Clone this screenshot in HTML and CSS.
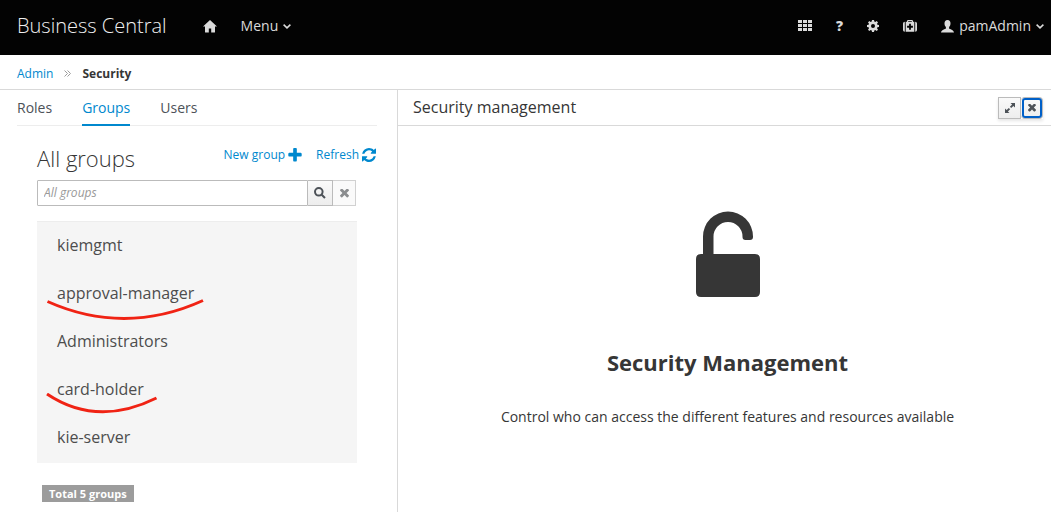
FILE: index.html
```html
<!DOCTYPE html>
<html lang="en">
<head>
<meta charset="utf-8">
<meta name="viewport" content="width=device-width, initial-scale=1">
<title>Business Central</title>
<link rel="stylesheet" href="styles.css">
</head>
<body>
<header class="masthead">
  <a class="brand" href="#">Business Central</a>
  <nav class="main-nav">
    <a class="nav-icon" href="#" aria-label="Home"><svg width="14" height="13" viewBox="0 0 14 13"><path d="M7 0 0 6.600h2V12a.5.5 0 0 0 .5.5h3.300V8.500h2.400v4h3.300A.5.5 0 0 0 12 12V6.600h2z"/></svg></a>
    <button class="nav-button" type="button">Menu <svg class="caret" width="8" height="5" viewBox="0 0 8 5"><path d="m.6.600 3.400 3.300L7.400.6"/></svg></button>
  </nav>
  <nav class="utility-nav">
    <button class="nav-icon" type="button" aria-label="Apps"><svg width="14" height="12" viewBox="0 0 14 12"><path d="M0 0h4v3H0zM5 0h4v3H5zM10 0h4v3h-4zM0 4h4v3H0zM5 4h4v3H5zM10 4h4v3h-4zM0 8h4v3H0zM5 8h4v3H5zM10 8h4v3h-4z"/></svg></button>
    <button class="nav-icon help" type="button" aria-label="Help">?</button>
    <button class="nav-icon" type="button" aria-label="Settings"><svg width="12" height="12" viewBox="0 0 12 12"><path fill-rule="evenodd" d="M5 0h2l.3 1.600 1 .4L9.700 1.100 11 2.400 10 3.700l.4 1L12 5v2l-1.600.3-.4 1 1 1.400-1.300 1.300L8.300 10l-1 .4L7 12H5l-.3-1.600-1-.4-1.400 1L1 9.700l1-1.400-.4-1L0 7V5l1.600-.3.4-1-1-1.300 1.300-1.300L3.700 2l1-.4zM6 4a2 2 0 1 0 0 4 2 2 0 0 0 0-4z"/></svg></button>
    <button class="nav-icon" type="button" aria-label="Support"><svg width="14" height="12" viewBox="0 0 14 12"><path fill-rule="evenodd" d="M1.800 1.800v10A1.800 1.800 0 0 1 0 10V3.600a1.800 1.800 0 0 1 1.800-1.800zM12.200 1.800A1.800 1.800 0 0 1 14 3.600V10a1.800 1.800 0 0 1-1.800 1.800zM4 1.800V.8L4.800 0h4.400l.8.8v1h1.300v10H2.700v-10zM5.200 1.800h3.600v-.7H5.200zM6.100 3.800v2H4.100v1.900h2v2h1.800v-2h2V5.800h-2v-2z"/></svg></button>
    <button class="nav-button user" type="button"><svg width="13" height="13" viewBox="0 0 13 13"><path d="M6.500 0c2 0 3 1.300 3 3.200 0 1.600-.5 2.900-1.400 3.700v1.500c.3.700 4.900 1.300 4.900 4.100H0c0-2.800 4.600-3.400 4.900-4.100V6.900c-.9-.8-1.400-2.100-1.400-3.700C3.500 1.300 4.500 0 6.500 0z"/></svg>pamAdmin <svg class="caret" width="8" height="5" viewBox="0 0 8 5"><path d="m.6.600 3.400 3.300L7.400.6"/></svg></button>
  </nav>
</header>

<nav class="breadcrumb" aria-label="Breadcrumb">
  <a href="#">Admin</a>
  <svg width="7" height="7" viewBox="0 0 7 7"><path d="m.5.500 3 3-3 3M3.500.5l3 3-3 3"/></svg>
  <strong>Security</strong>
</nav>

<div class="workspace">
  <aside class="sidebar">
    <nav class="tabs">
      <a href="#">Roles</a>
      <a class="active" href="#">Groups</a>
      <a href="#">Users</a>
    </nav>
    <div class="groups">
      <div class="groups-head">
        <h2>All groups</h2>
        <div class="actions">
          <a href="#">New group <svg width="14" height="14" viewBox="160 128 1472 1472"><path d="M1600 736v192q0 40-28 68t-68 28h-416v416q0 40-28 68t-68 28h-192q-40 0-68-28t-28-68v-416h-416q-40 0-68-28t-28-68v-192q0-40 28-68t68-28h416v-416q0-40 28-68t68-28h192q40 0 68 28t28 68v416h416q40 0 68 28t28 68z"/></svg></a>
          <a href="#">Refresh <svg width="14" height="14" viewBox="128 128 1536 1536"><path d="M1639 1056q0 5-1 7-64 268-268 434.500t-478 166.500q-146 0-282.500-55t-243.500-157l-129 129q-19 19-45 19t-45-19-19-45v-448q0-26 19-45t45-19h448q26 0 45 19t19 45-19 45l-137 137q71 66 161 102t187 36q134 0 250-65t186-179q11-17 53-117 8-23 30-23h192q13 0 22.500 9.500t9.500 22.500zm25-800v448q0 26-19 45t-45 19h-448q-26 0-45-19t-19-45 19-45l138-138q-148-137-349-137-134 0-250 65t-186 179q-11 17-53 117-8 23-30 23h-199q-13 0-22.500-9.500t-9.500-22.500v-7q65-268 270-434.500t480-166.500q146 0 284 55.500t245 156.500l130-129q19-19 45-19t45 19 19 45z"/></svg></a>
        </div>
      </div>
      <form class="search">
        <input type="text" placeholder="All groups" aria-label="Search groups">
        <button type="button" aria-label="Search"><svg width="12" height="12" viewBox="0 0 12 12"><circle class="lens" cx="4.800" cy="4.800" r="3.800"/><path class="lens" d="m7.700 7.700 3.300 3.300"/></svg></button>
        <button class="clear" type="button" aria-label="Clear"><svg width="9" height="9" viewBox="302 430 1188 1188"><path d="M1490 1322q0 40-28 68l-136 136q-28 28-68 28t-68-28l-294-294-294 294q-28 28-68 28t-68-28l-136-136q-28-28-28-68t28-68l294-294-294-294q-28-28-28-68t28-68l136-136q28-28 68-28t68 28l294 294 294-294q28-28 68-28t68 28l136 136q28 28 28 68t-28 68l-294 294 294 294q28 28 28 68z"/></svg></button>
      </form>
      <ul class="group-list">
        <li>kiemgmt</li>
        <li>approval-manager<svg class="stroke" width="160" height="24" viewBox="0 0 160 24"><path d="M1.500 4.500Q79 39 157 3.500"/></svg></li>
        <li>Administrators</li>
        <li>card-holder<svg class="stroke" width="114" height="24" viewBox="0 0 114 24"><path d="M1 1Q51 34.500 110.500 5"/></svg></li>
        <li>kie-server</li>
      </ul>
      <span class="total">Total 5 groups</span>
    </div>
  </aside>

  <main class="panel">
    <div class="panel-head">
      <h1>Security management</h1>
      <div class="panel-buttons">
        <button type="button" aria-label="Maximize"><svg width="10" height="10" viewBox="0 0 10 10"><path d="M5.500 0H10v4.500L8.400 2.900 6.200 5.100 4.900 3.800l2.200-2.200zM4.500 10H0V5.500l1.600 1.600 2.200-2.200 1.300 1.300-2.200 2.200z"/></svg></button>
        <button class="focused" type="button" aria-label="Close"><svg width="8" height="8" viewBox="302 430 1188 1188"><path d="M1490 1322q0 40-28 68l-136 136q-28 28-68 28t-68-28l-294-294-294 294q-28 28-68 28t-68-28l-136-136q-28-28-28-68t28-68l294-294-294-294q-28-28-28-68t28-68l136-136q28-28 68-28t68 28l294 294 294-294q28-28 68-28t68 28l136 136q28 28 28 68t-28 68l-294 294 294 294q28 28 28 68z"/></svg></button>
      </div>
    </div>
    <div class="welcome">
      <svg width="64" height="86" viewBox="0 0 64 86"><path d="M7 43V25.500a25 25 0 0 1 50 0V26q0 3-3 3h-4.500q-3 0-3-3v-.5a14.500 14.500 0 0 0-29 0V43H59q5 0 5 5v33q0 5-5 5H5q-5 0-5-5V48q0-5 5-5z"/></svg>
      <h2>Security Management</h2>
      <p>Control who can access the different features and resources available</p>
    </div>
  </main>
</div>
</body>
</html>
```
FILE: styles.css
```css
* {
  box-sizing: border-box;
}

body {
  margin: 0;
  min-height: 100vh;
  display: flex;
  flex-direction: column;
  background: #fff;
  color: #363636;
  font: 12px/20px "Open Sans", "Noto Sans", sans-serif;
}

h1, h2, p, ul {
  margin: 0;
  padding: 0;
}

a {
  color: #0088ce;
  text-decoration: none;
}

button, input {
  font: inherit;
}

button {
  margin: 0;
  cursor: pointer;
}

svg {
  flex: none;
  fill: currentColor;
}

.masthead {
  display: flex;
  align-items: center;
  height: 55px;
  padding: 0 7px 3px 17px;
  background: #030303;
  color: #dbdbdb;
}

.brand {
  color: #f0f0f0;
  font-size: 20px;
  font-weight: 300;
  line-height: 28px;
}

.main-nav, .utility-nav {
  display: flex;
  align-items: center;
}

.main-nav {
  gap: 24px;
  margin-left: 36px;
}

.utility-nav {
  gap: 24px;
  margin-left: auto;
}

.nav-icon, .nav-button {
  display: flex;
  align-items: center;
  padding: 0;
  border: 0;
  background: none;
  color: inherit;
  font-size: 14px;
}

.nav-button {
  gap: 5px;
}

.help {
  font-weight: 800;
}

.caret {
  fill: none;
  stroke: currentColor;
  stroke-width: 1.5;
}

.breadcrumb {
  display: flex;
  align-items: center;
  gap: 11px;
  height: 35px;
  padding: 3px 17px 0;
  border-bottom: 1px solid #d9d9d9;
}

.breadcrumb svg {
  fill: none;
  stroke: #9c9c9c;
}

.workspace {
  flex: 1;
  display: grid;
  grid-template-columns: minmax(0, 398fr) minmax(0, 653fr);
}

.sidebar {
  padding-left: 17px;
  padding-right: 20px;
  border-right: 1px solid #d9d9d9;
}

.tabs {
  display: flex;
  gap: 30px;
  height: 36px;
  border-bottom: 1px solid #ededed;
  font-size: 14px;
}

.tabs a {
  height: 36px;
  padding-top: 8px;
  color: #4d5258;
}

.tabs .active {
  border-bottom: 2px solid #0088ce;
  color: #0088ce;
}

.groups {
  padding: 18px 1px 10px 20px;
}

.groups-head {
  display: flex;
  justify-content: space-between;
  height: 36px;
}

.groups-head h2 {
  font-size: 22px;
  font-weight: 300;
  line-height: 28px;
}

.actions {
  display: flex;
  gap: 14px;
}

.actions a {
  display: flex;
  align-items: center;
  gap: 3px;
  height: 22px;
}

.search {
  display: flex;
  height: 26px;
  margin-right: 20px;
}

.search input {
  flex: 1;
  min-width: 0;
  padding: 0 6px;
  border: 1px solid #bbb;
  border-radius: 1px 0 0 1px;
}

.search input::placeholder {
  color: #999;
  font-style: italic;
}

.search button, .panel-buttons button {
  display: flex;
  align-items: center;
  justify-content: center;
  padding: 0;
  border: 1px solid #bbb;
  background: linear-gradient(#fafafa, #ededed);
  color: #4d5258;
}

.search button {
  width: 25px;
  border-left: 0;
}

.search .clear {
  width: 23px;
  border-color: #d1d1d1;
  background: #fafafa;
  color: #8b8d8f;
}

.lens {
  fill: none;
  stroke: currentColor;
  stroke-width: 2;
}

.group-list {
  margin-top: 15px;
  margin-right: 19px;
  padding-bottom: 1px;
  border-top: 1px solid #ededed;
  background: #f5f5f5;
  color: #4d4d4d;
  font-size: 16px;
  line-height: 46px;
  list-style: none;
}

.group-list li {
  position: relative;
  height: 48px;
  padding-left: 20px;
}

.stroke {
  position: absolute;
  top: 27px;
  left: 9px;
  fill: none;
  stroke: #f02314;
  stroke-width: 3;
}

.total {
  display: inline-block;
  margin: 22px 5px 0;
  padding: 0 7px;
  background: #9c9c9c;
  color: #fff;
  font-size: 11px;
  font-weight: 700;
  line-height: 17px;
}

.panel-head {
  display: flex;
  align-items: center;
  justify-content: space-between;
  height: 36px;
  padding: 0 8px 0 15px;
  border-bottom: 1px solid #d9d9d9;
}

.panel-head h1 {
  padding-bottom: 2px;
  font-size: 16px;
  font-weight: 400;
}

.panel-buttons {
  display: flex;
  box-shadow: 0 2px 3px rgba(3, 3, 3, 0.1);
}

.panel-buttons button {
  width: 23px;
  height: 22px;
}

.panel-buttons .focused {
  border-left: 0;
  width: 22px;
  outline: 2px solid #0060c8;
  outline-offset: -3px;
  border-radius: 4px;
}

.welcome {
  display: flex;
  flex-direction: column;
  align-items: center;
  padding: 85px 15px 20px 21px;
  text-align: center;
}

.welcome h2 {
  margin-top: 49px;
  font-size: 22px;
  font-weight: 700;
  line-height: 32px;
}

.welcome p {
  margin-top: 29px;
  font-size: 14px;
}
```
